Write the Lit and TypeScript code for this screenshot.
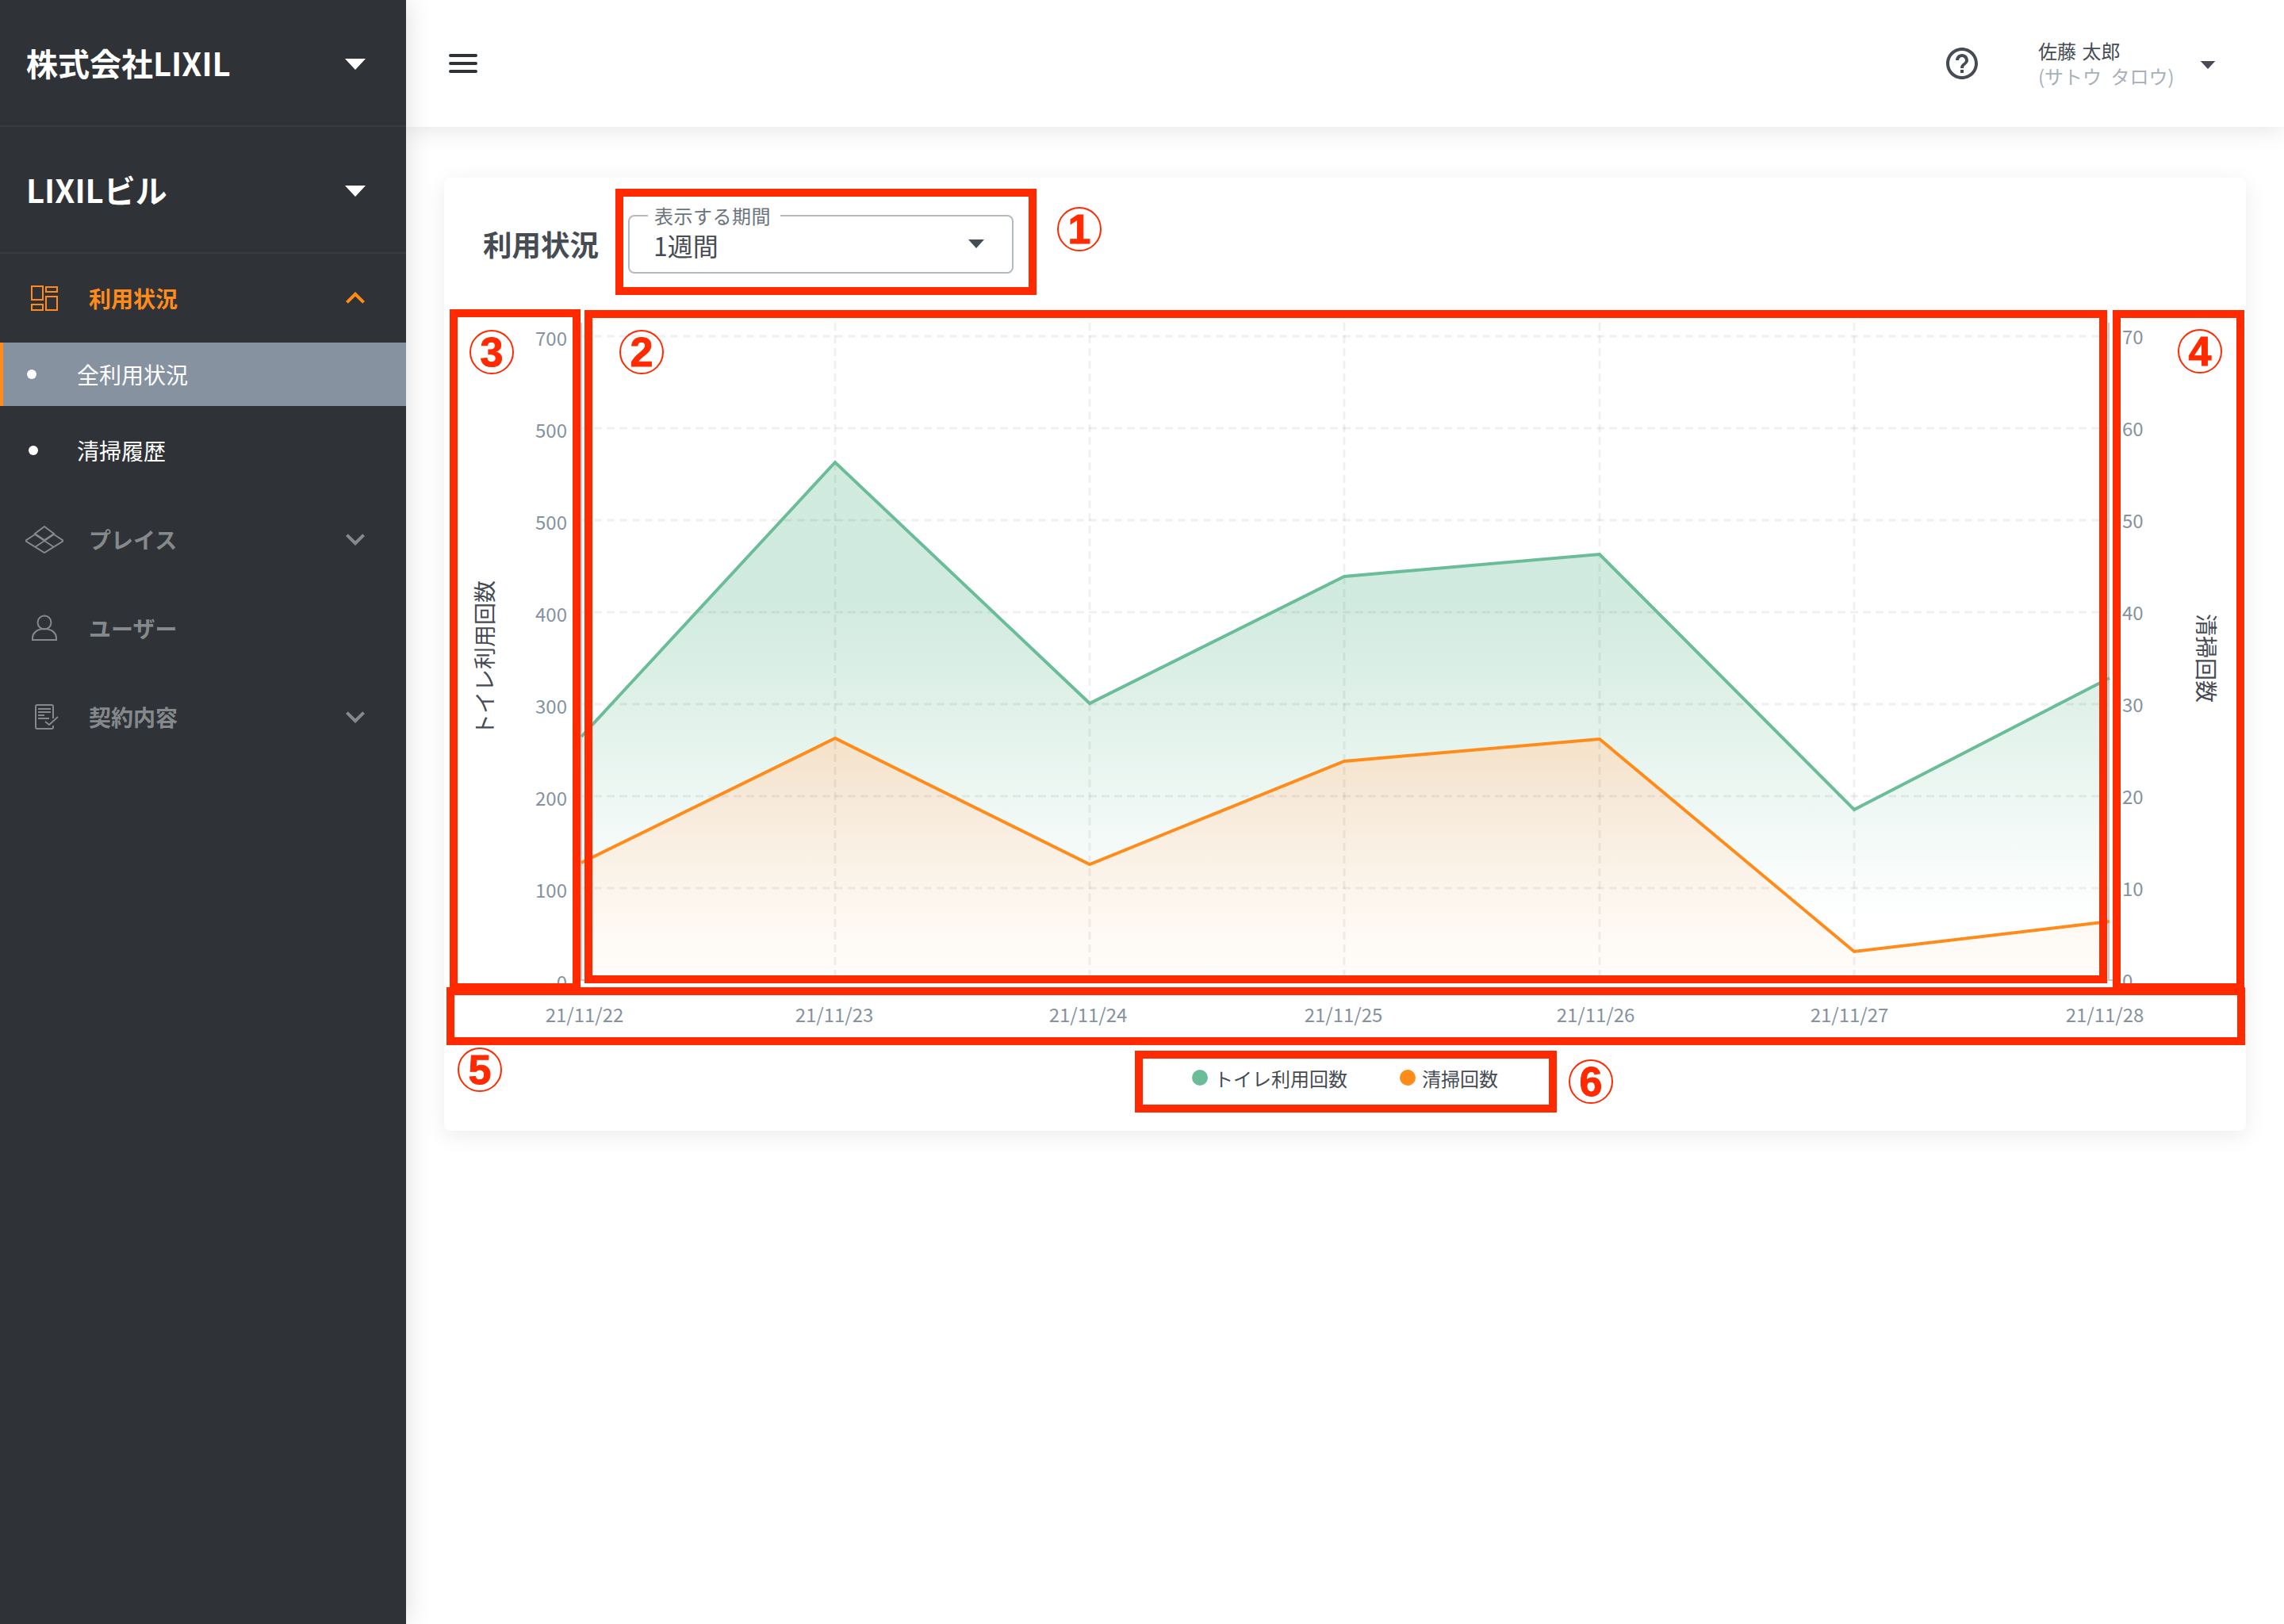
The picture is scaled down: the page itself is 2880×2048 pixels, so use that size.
import { LitElement, html, svg, css } from 'lit';
import { customElement } from 'lit/decorators.js';

const GREEN = '#6bbd99';
const ORANGE = '#ff8c1a';

const xs = [733, 1053, 1374, 1695, 2017, 2338, 2660];
const usage = [929, 583, 887, 727, 699, 1021, 855];
const cleaning = [1088, 931, 1090, 960, 932, 1200, 1162];
const gridY = [424, 540, 656, 772, 888, 1004, 1120];
const leftTicks = ['700', '500', '500', '400', '300', '200', '100', '0'];
const rightTicks = ['70', '60', '50', '40', '30', '20', '10', '0'];
const dates: [string, number][] = [
  ['21/11/22', 737],
  ['21/11/23', 1052],
  ['21/11/24', 1372],
  ['21/11/25', 1694],
  ['21/11/26', 2012],
  ['21/11/27', 2332],
  ['21/11/28', 2654],
];

// page coordinates of the red callouts, relative to the card is worked out in render
const CARD_X = 560;
const CARD_Y = 224;
const frames = [
  [776, 238, 1307, 372],
  [567, 390, 732, 1250],
  [737, 391, 2657, 1240],
  [2664, 391, 2830, 1250],
  [563, 1245, 2831, 1318],
  [1431, 1325, 1963, 1403],
];
const marks: [string, number, number][] = [
  ['1', 1361, 289],
  ['2', 809, 444],
  ['3', 620, 444],
  ['4', 2774, 443],
  ['5', 605, 1349],
  ['6', 2006, 1364],
];

const points = (ys: number[]) => xs.map((x, i) => `${x},${ys[i]}`).join(' ');
const area = (ys: number[]) => `${points(ys)} 2660,1236 733,1236`;

const chevronDown = html`<svg class="chev" viewBox="0 0 24 24"><path d="M16.59 8.59 12 13.17 7.41 8.59 6 10l6 6 6-6z" /></svg>`;
const chevronUp = html`<svg class="chev" viewBox="0 0 24 24"><path d="M7.41 15.41 12 10.83l4.59 4.58L18 14l-6-6-6 6z" /></svg>`;
const caret = html`<svg class="caret" viewBox="0 0 26 14"><path d="M0 0h26L13 14z" /></svg>`;

const iconDash = html`<svg class="ico" viewBox="0 0 48 48">
  <rect x="8" y="9" width="14" height="17" />
  <rect x="8" y="32" width="14" height="7" />
  <rect x="26" y="10" width="14" height="6" />
  <rect x="26" y="22" width="14" height="17" />
</svg>`;
const iconPlace = html`<svg class="ico" viewBox="32 656 48 48">
  <path d="M44 674 32 682l24 15 24-15-12-8" />
  <path d="M44 690l24-16M68 690 44 674" />
  <path d="M56 664l12 9-12 8-12-8z" />
</svg>`;
const iconUser = html`<svg class="ico" viewBox="32 768 48 48">
  <circle cx="56" cy="785" r="8.5" />
  <path d="M41 807v-2c0-7 6-12 15-12s15 5 15 12v2z" />
</svg>`;
const iconDoc = html`<svg class="ico" viewBox="32 880 48 48">
  <path d="M67 906v-15a2 2 0 0 0-2-2H47a2 2 0 0 0-2 2v26a2 2 0 0 0 2 2h18a2 2 0 0 0 2-2v-2" />
  <path d="M48 894h16M48 898h16M48 902h8M48 906h14" />
  <path d="M57 910l5 4 11-10" />
</svg>`;

@customElement('app-root')
export class AppRoot extends LitElement {
  static styles = css`
    :host {
      display: grid;
      grid-template-columns: 512px 1fr;
      height: 2048px;
      background: #fff;
      font-family: 'Noto Sans CJK JP', 'Noto Sans', sans-serif;
      color: #454c53;
    }

    .side {
      position: relative;
      z-index: 2;
      background: #2f3338;
      box-shadow: 0 0 32px rgba(0, 0, 0, 0.14);
    }
    .picker {
      display: flex;
      align-items: center;
      justify-content: space-between;
      height: 160px;
      box-sizing: border-box;
      padding: 0 51px 0 33px;
      border-bottom: 2px solid #383c41;
      color: #fff;
      font-size: 40px;
      font-weight: 700;
    }
    .caret {
      width: 26px;
      height: 14px;
      margin-top: 3px;
      fill: #fff;
    }
    .nav {
      display: flex;
      align-items: center;
      height: 112px;
      padding: 0 40px 0 32px;
      color: #85898c;
      font-size: 28px;
      font-weight: 700;
    }
    .nav span {
      flex: 1;
      margin-left: 32px;
    }
    .nav.on {
      color: #ff8c1a;
    }
    .ico {
      width: 48px;
      height: 48px;
      fill: none;
      stroke: currentColor;
      stroke-width: 2;
    }
    .chev {
      width: 48px;
      height: 48px;
      fill: currentColor;
    }
    .sub {
      display: flex;
      align-items: center;
      gap: 49px;
      height: 112px;
      padding-left: 36px;
      color: #fff;
      font-size: 28px;
    }
    .sub.on {
      height: 80px;
      gap: 51px;
      padding-left: 30px;
      background: #8692a0;
      border-left: 4px solid #ff8c1a;
    }
    .dot {
      width: 12px;
      height: 12px;
      border-radius: 50%;
      background: #fff;
    }

    .main {
      display: flex;
      flex-direction: column;
      min-width: 0;
    }
    .top {
      position: relative;
      z-index: 1;
      display: flex;
      align-items: center;
      height: 160px;
      padding: 0 86px 0 54px;
      background: #fff;
      box-shadow: 0 4px 28px rgba(0, 0, 0, 0.1);
    }
    .burger {
      display: flex;
      flex-direction: column;
      gap: 6px;
      margin-right: auto;
    }
    .burger i {
      width: 36px;
      height: 4px;
      border-radius: 2px;
      background: #2f3338;
    }
    .help {
      width: 48px;
      height: 48px;
      fill: #454c53;
      margin-right: 72px;
    }
    .who {
      width: 204px;
      font-size: 24px;
      line-height: 32px;
      word-spacing: 2px;
    }
    .who small {
      display: block;
      font-size: 24px;
      word-spacing: 6px;
      color: #a7b0ba;
    }
    .top .caret {
      width: 20px;
      height: 10px;
      fill: #454c53;
    }

    .content {
      padding: 64px 48px 0;
    }
    .card {
      position: relative;
      height: 1202px;
      border-radius: 8px;
      background: #fff;
      box-shadow: 0 6px 28px rgba(0, 0, 0, 0.08);
    }
    .head {
      display: flex;
      align-items: flex-start;
      gap: 37px;
      padding: 33px 0 0 49px;
      margin-bottom: 47px;
    }
    .head h2 {
      margin: 25px 0 0;
      font-size: 36.5px;
      line-height: 52px;
      font-weight: 700;
    }
    fieldset {
      width: 486px;
      height: 88px;
      box-sizing: border-box;
      margin: 0;
      padding: 0 35px 0 30px;
      border: 2px solid #b4bac1;
      border-radius: 8px;
    }
    legend {
      margin-left: -7px;
      padding: 0 12px 0 8px;
      font-size: 24px;
      line-height: 30px;
      letter-spacing: 0.5px;
      color: #6b747d;
    }
    .value {
      display: flex;
      align-items: center;
      justify-content: space-between;
      font-size: 32px;
      line-height: 44px;
    }
    .value svg {
      width: 20px;
      height: 11px;
      margin-top: -4px;
      fill: #454c53;
    }

    .chart {
      display: block;
      width: 2272px;
      height: 926px;
    }
    .chart text {
      font-size: 24px;
      fill: #8692a0;
    }
    .chart .axis-title {
      font-size: 28px;
      fill: #454c53;
      text-anchor: middle;
      dominant-baseline: central;
    }
    .grid {
      stroke: rgba(0, 0, 0, 0.06);
      stroke-width: 3;
      stroke-dasharray: 10 6;
    }
    .edge {
      stroke: #c7cbcf;
      stroke-width: 2;
    }
    .line {
      fill: none;
      stroke-width: 4;
      stroke-linejoin: miter;
    }

    .legend {
      display: flex;
      justify-content: center;
      align-items: center;
      gap: 66px;
      height: 82px;
      font-size: 24px;
    }
    .legend div {
      display: flex;
      align-items: center;
      gap: 8px;
    }
    .legend i {
      width: 20px;
      height: 20px;
      border-radius: 50%;
    }
    .legend .green {
      background: #6bbd99;
    }
    .legend .orange {
      background: #ff8c1a;
    }

    .frame {
      position: absolute;
      box-sizing: border-box;
      border: 10px solid #ff2a00;
      pointer-events: none;
    }
    .mark {
      position: absolute;
      display: flex;
      align-items: center;
      justify-content: center;
      box-sizing: border-box;
      width: 56px;
      height: 56px;
      margin: -28px 0 0 -28px;
      border: 2px solid #ff2a00;
      border-radius: 50%;
      color: #ff2a00;
      font-family: 'Liberation Sans', sans-serif;
      font-size: 52px;
      font-weight: 700;
      line-height: 1;
      -webkit-text-stroke: 1px #ff2a00;
    }
  `;

  render() {
    return html`
      <aside class="side">
        <div class="picker"><span>株式会社LIXIL</span>${caret}</div>
        <div class="picker"><span>LIXILビル</span>${caret}</div>
        <div class="nav on">${iconDash}<span>利用状況</span>${chevronUp}</div>
        <div class="sub on"><i class="dot"></i>全利用状況</div>
        <div class="sub"><i class="dot"></i>清掃履歴</div>
        <div class="nav">${iconPlace}<span>プレイス</span>${chevronDown}</div>
        <div class="nav">${iconUser}<span>ユーザー</span></div>
        <div class="nav">${iconDoc}<span>契約内容</span>${chevronDown}</div>
      </aside>
      <div class="main">
        <header class="top">
          <div class="burger"><i></i><i></i><i></i></div>
          <svg class="help" viewBox="0 0 24 24">
            <path d="M11 18h2v-2h-2v2zm1-16C6.48 2 2 6.48 2 12s4.48 10 10 10 10-4.48 10-10S17.52 2 12 2zm0 18c-4.41 0-8-3.59-8-8s3.59-8 8-8 8 3.59 8 8-3.59 8-8 8zm0-14c-2.21 0-4 1.79-4 4h2c0-1.1.9-2 2-2s2 .9 2 2c0 2-3 1.75-3 5h2c0-2.25 3-2.5 3-5 0-2.21-1.79-4-4-4z" />
          </svg>
          <div class="who">佐藤 太郎<small>(サトウ タロウ)</small></div>
          ${caret}
        </header>
        <div class="content">
          <section class="card">
            <div class="head">
              <h2>利用状況</h2>
              <fieldset>
                <legend>表示する期間</legend>
                <div class="value">1週間<svg viewBox="0 0 26 14"><path d="M0 0h26L13 14z" /></svg></div>
              </fieldset>
            </div>
            ${this.renderChart()}
            <div class="legend">
              <div><i class="green"></i>トイレ利用回数</div>
              <div><i class="orange"></i>清掃回数</div>
            </div>
            ${frames.map(
              ([x1, y1, x2, y2]) =>
                html`<div
                  class="frame"
                  style="left:${x1 - CARD_X}px;top:${y1 - CARD_Y}px;width:${x2 - x1}px;height:${y2 - y1}px"
                ></div>`
            )}
            ${marks.map(
              ([n, x, y]) =>
                html`<div class="mark" style="left:${x - CARD_X}px;top:${y - CARD_Y}px">${n}</div>`
            )}
          </section>
        </div>
      </div>
    `;
  }

  renderChart() {
    return html`<svg class="chart" viewBox="560 392 2272 926">
      <defs>
        <linearGradient id="gFill" gradientUnits="userSpaceOnUse" x1="0" y1="760" x2="0" y2="1160">
          <stop offset="0" stop-color="${GREEN}" stop-opacity="0.31" />
          <stop offset="1" stop-color="${GREEN}" stop-opacity="0" />
        </linearGradient>
        <linearGradient id="oFill" gradientUnits="userSpaceOnUse" x1="0" y1="931" x2="0" y2="1236">
          <stop offset="0" stop-color="#f5e2c8" />
          <stop offset="0.25" stop-color="#f6e9d9" />
          <stop offset="0.62" stop-color="#fcf5ec" />
          <stop offset="1" stop-color="#fffdfb" />
        </linearGradient>
      </defs>
      <polygon points="${area(usage)}" fill="url(#gFill)" />
      <polygon points="${area(cleaning)}" fill="url(#oFill)" />
      ${gridY.map((y) => svg`<line class="grid" x1="733" x2="2660" y1="${y}" y2="${y}" />`)}
      ${xs.slice(1, -1).map((x) => svg`<line class="grid" x1="${x}" x2="${x}" y1="407" y2="1236" />`)}
      <line class="edge" x1="733" x2="733" y1="407" y2="1236" />
      <line class="edge" x1="2659" x2="2659" y1="407" y2="1236" />
      <line class="edge" x1="724" x2="2668" y1="1236" y2="1236" />
      <polyline class="line" points="${points(usage)}" stroke="${GREEN}" />
      <polyline class="line" points="${points(cleaning)}" stroke="${ORANGE}" />
      ${leftTicks.map((t, i) => svg`<text x="715" y="${436 + i * 116}" text-anchor="end">${t}</text>`)}
      ${rightTicks.map((t, i) => svg`<text x="2676" y="${434 + i * 116}">${t}</text>`)}
      ${dates.map(([d, x]) => svg`<text x="${x}" y="1289" text-anchor="middle">${d}</text>`)}
      <text class="axis-title" transform="rotate(-90 610 830)" x="610" y="830">トイレ利用回数</text>
      <text class="axis-title" transform="rotate(90 2783 830)" x="2783" y="830">清掃回数</text>
    </svg>`;
  }
}
